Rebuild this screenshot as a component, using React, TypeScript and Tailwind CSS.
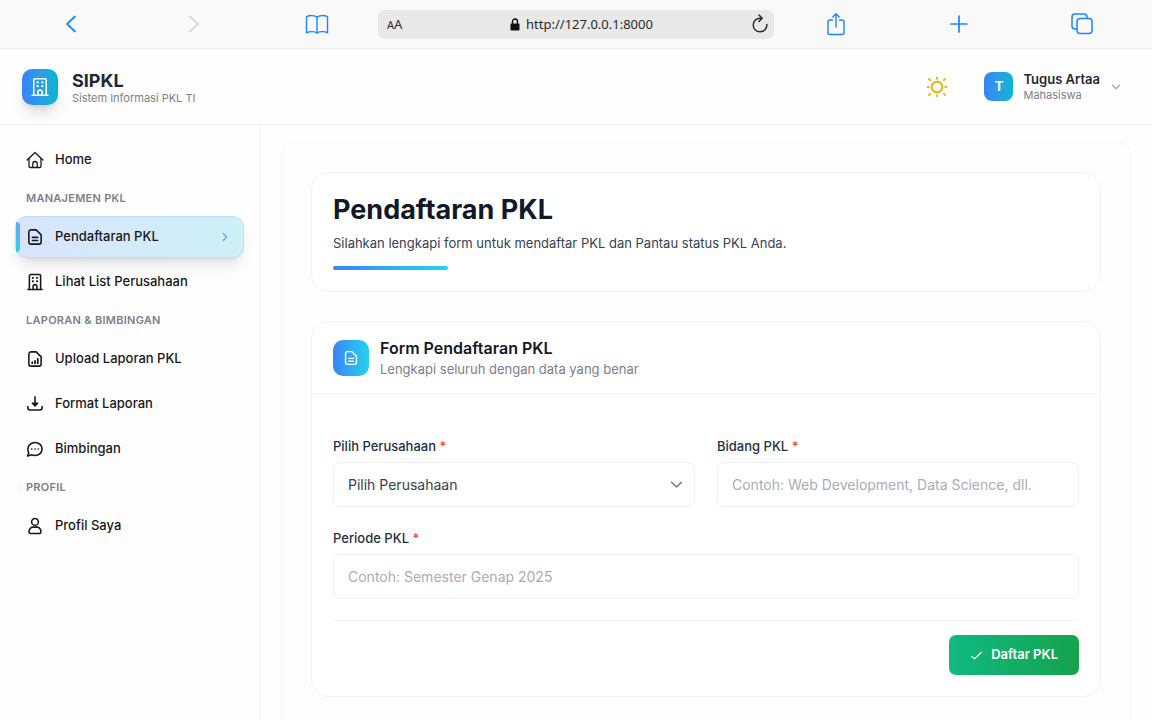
import type { ReactNode } from "react";

type IconProps = { className?: string; children: ReactNode; weight?: number };

function Icon({ className = "size-[18px]", children, weight = 2.1 }: IconProps) {
  return (
    <svg
      viewBox="0 0 24 24"
      fill="none"
      stroke="currentColor"
      strokeWidth={weight}
      strokeLinecap="round"
      strokeLinejoin="round"
      className={`shrink-0 ${className}`}
      aria-hidden="true"
    >
      {children}
    </svg>
  );
}

const HomeShape = (
  <g strokeWidth={1.7}>
    <path d="M1.5 12 12 2l10.500 10" />
    <path d="M4 10v10.300a1.700 1.700 0 0 0 1.700 1.700h12.600a1.700 1.700 0 0 0 1.700-1.700V10" />
    <path d="M9 21.800V17a3 3 0 0 1 6 0v4.800" />
  </g>
);

const BuildingShape = (
  <>
    <path d="M2.500 22h19" />
    <path d="M4.500 22V4a2 2 0 0 1 2-2h11a2 2 0 0 1 2 2v18" />
    <path d="M9.500 22v-4a2.500 2.500 0 0 1 5 0v4" />
    <path d="M9 6.500h.4M14.600 6.500h.4M9 11h.4M14.600 11h.4" strokeWidth={2.6} />
  </>
);

const DocShape = (
  <>
    <path d="M3.800 5.500a3 3 0 0 1 3-3h6.700l6.700 6.700v9.300a3 3 0 0 1-3 3H6.800a3 3 0 0 1-3-3z" />
    <path d="M8.500 12.500h7M8.500 16.700h7" />
  </>
);

const ReportShape = (
  <>
    <path d="M3.800 5.500a3 3 0 0 1 3-3h6.700l6.700 6.700v9.300a3 3 0 0 1-3 3H6.800a3 3 0 0 1-3-3z" />
    <path d="M8.300 17.500v-1.200M12 17.500v-3M15.700 17.500v-5.800" strokeWidth={2.4} />
  </>
);

const DownloadShape = (
  <>
    <path d="M12 2.500v11.500M8.500 11l3.500 3.500 3.500-3.500z" />
    <path d="M2.500 15.500v1.500a3 3 0 0 0 3 3h13a3 3 0 0 0 3-3v-1.500" />
  </>
);

const ChatShape = (
  <>
    <path d="M2.200 21.300 3.700 17A9 9 0 0 1 2.500 12C2.500 7 6.700 3.300 12 3.300S21.500 7 21.500 12s-4.200 8.700-9.500 8.700c-1.600 0-3.200-.4-4.500-1z" />
    <path d="M7.600 12h.1M12 12h.1M16.400 12h.1" strokeWidth={2.200} />
  </>
);

const UserShape = (
  <>
    <circle cx="12" cy="6.500" r="4.500" />
    <path d="M9 13.500h6c3 0 5 3.500 5 6.500a2 2 0 0 1-2 2H6a2 2 0 0 1-2-2c0-3 2-6.500 5-6.500z" />
  </>
);

function ToolButton({ label, children }: { label: string; children: ReactNode }) {
  return (
    <div className="flex flex-1 justify-center">
      <button type="button" aria-label={label} className="text-[#1a86ff]">
        {children}
      </button>
    </div>
  );
}

function BrowserBar() {
  return (
    <div className="flex h-[49px] shrink-0 items-center border-b border-[#ececec] bg-[#f9f9f9] px-[9px]">
      <ToolButton label="Kembali">
        <Icon className="size-6" weight={1.8}>
          <path d="M16 4.500 8 12l8 7.500" />
        </Icon>
      </ToolButton>
      <ToolButton label="Maju">
        <Icon className="size-6 text-[#cfcfcf]" weight={1.5}>
          <path d="M8 4.500 16 12l-8 7.500" />
        </Icon>
      </ToolButton>
      <ToolButton label="Bookmark">
        <Icon className="size-6" weight={1.4}>
          <path d="M12 5.200C10 3.200 4.500 3 1.500 4.800v16c3-1.600 8.500-1.500 10.500.3 2-1.800 7.500-1.900 10.500-.3v-16C19.500 3 14 3.200 12 5.200z" />
          <path d="M12 5.200v15.900" />
        </Icon>
      </ToolButton>
      <div className="flex h-[29px] w-[396px] items-center rounded-lg bg-[#e8e8e8] pl-[9px] pr-1.5 font-['Noto_Sans',sans-serif] text-[#2b2b2b]">
        <button type="button" aria-label="Ukuran teks" className="flex w-6 items-baseline leading-4">
          <span className="text-[11px]">A</span>
          <span className="text-[13px]">A</span>
        </button>
        <div className="flex flex-1 items-center justify-center gap-1.5">
          <svg viewBox="0 0 10 13" className="h-[13px] w-[10px]" aria-hidden="true">
            <rect x="0.500" y="5.500" width="9" height="7" rx="1.200" fill="#111" />
            <path d="M2.500 6V3.500a2.500 2.500 0 0 1 5 0V6" fill="none" stroke="#111" strokeWidth="1.400" />
          </svg>
          <span className="text-[13px] leading-4">http://127.0.0.1:8000</span>
        </div>
        <button type="button" aria-label="Muat ulang" className="flex w-4 justify-center">
          <svg viewBox="0 0 18 20" className="h-5 w-[18px] shrink-0" fill="none" stroke="#2b2b2b" strokeWidth="1.500" aria-hidden="true">
            <path d="M15.800 10.500A6.800 6.800 0 1 1 9 4.200h1.500" strokeLinecap="round" />
            <path d="m8 1 3.200 3.200L8 7.400" strokeLinecap="round" strokeLinejoin="round" />
          </svg>
        </button>
      </div>
      <ToolButton label="Bagikan">
        <Icon className="size-6" weight={1.4}>
          <path d="M8.500 8H6a2 2 0 0 0-2 2v10.500a2 2 0 0 0 2 2h12a2 2 0 0 0 2-2V10a2 2 0 0 0-2-2h-2.500" />
          <path d="M12 15V2M8.800 5 12 1.800 15.200 5" />
        </Icon>
      </ToolButton>
      <ToolButton label="Tab baru">
        <Icon className="size-6" weight={1.7}>
          <path d="M12 4v16M4 12h16" />
        </Icon>
      </ToolButton>
      <ToolButton label="Semua tab">
        <Icon className="size-6" weight={1.5}>
          <rect x="7" y="6.500" width="15" height="15" rx="3" />
          <path d="M7 17H5a3 3 0 0 1-3-3V5a3 3 0 0 1 3-3h9a3 3 0 0 1 3 3v1.500" />
        </Icon>
      </ToolButton>
    </div>
  );
}

function AppHeader() {
  return (
    <header className="flex h-[76px] shrink-0 items-center justify-between border-b border-[#f0f0f1] pl-[22px] pr-[30px]">
      <div className="flex items-center gap-3.5">
        <div className="flex size-9 items-center justify-center rounded-[10px] bg-linear-to-r from-[#3b82f6] to-[#06b6d4] text-white shadow-lg shadow-black/15">
          <Icon className="size-5" weight={1.8}>{BuildingShape}</Icon>
        </div>
        <div>
          <p className="pt-0.5 text-lg font-bold leading-5 text-[#1f2937]">SIPKL</p>
          <p className="text-[11px] leading-[14px] text-[#7b808a]">Sistem Informasi PKL TI</p>
        </div>
      </div>
      <div className="flex items-center gap-9">
        <button type="button" aria-label="Ganti tema" className="text-[#eab308]">
          <Icon className="size-[22px]">
            <circle cx="12" cy="12" r="5.800" />
            <path d="M12 1.800v1.200M12 21v1.200M1.800 12h1.200M21 12h1.200M3.200 3.200l1.300 1.300M19.500 19.500l1.300 1.300M3.200 20.800l1.300-1.300M19.500 4.500l1.300-1.300" />
          </Icon>
        </button>
        <button type="button" className="flex items-center gap-2.5 text-left">
          <span className="flex size-[29px] items-center justify-center rounded-lg bg-linear-to-r from-[#3b82f6] to-[#06b6d4] text-[13px] font-bold text-white">
            T
          </span>
          <span className="flex flex-col">
            <span className="text-[13px] font-semibold leading-4 text-[#1f2937]">Tugus Artaa</span>
            <span className="text-[11px] leading-4 text-[#7b808a]">Mahasiswa</span>
          </span>
          <Icon className="size-3 text-[#a3a8b1]" weight={2.400}>
            <path d="m5 8.500 7 7 7-7" />
          </Icon>
        </button>
      </div>
    </header>
  );
}

function NavItem({ label, icon }: { label: string; icon: ReactNode }) {
  return (
    <a href="#" className="flex h-[42px] items-center gap-[11px] px-[11px] text-[13px] font-medium text-[#18181b]">
      <Icon>{icon}</Icon>
      {label}
    </a>
  );
}

function NavHeading({ children }: { children: ReactNode }) {
  return (
    <h2 className="px-[11px] pb-[11px] pt-2.5 text-[11px] font-semibold leading-[14px] tracking-wide text-[#7b808a]">
      {children}
    </h2>
  );
}

function Sidebar() {
  return (
    <nav className="w-[260px] shrink-0 border-r border-[#f2f2f3] px-[15px] pt-3.5">
      <NavItem label="Home" icon={HomeShape} />
      <NavHeading>MANAJEMEN PKL</NavHeading>
      <a
        href="#"
        aria-current="page"
        className="relative mb-[3px] flex h-[42px] items-center gap-[11px] rounded-[11px] border border-[#bfdbfe] bg-linear-to-r from-[#d8e4fd] to-[#cdf1f6] px-2.5 text-[13px] font-medium text-[#18181b] shadow-lg shadow-black/10"
      >
        <span className="absolute left-0 top-[5px] h-[30px] w-1 rounded-r-full bg-linear-to-b from-[#60a5fa] to-[#22d3ee]" />
        <Icon>{DocShape}</Icon>
        <span className="flex-1">Pendaftaran PKL</span>
        <Icon className="mr-0.5 size-3 text-[#60a5fa]" weight={2.400}>
          <path d="m8.500 5 7 7-7 7" />
        </Icon>
      </a>
      <NavItem label="Lihat List Perusahaan" icon={BuildingShape} />
      <NavHeading>LAPORAN &amp; BIMBINGAN</NavHeading>
      <div className="flex flex-col gap-[3px]">
        <NavItem label="Upload Laporan PKL" icon={ReportShape} />
        <NavItem label="Format Laporan" icon={DownloadShape} />
        <NavItem label="Bimbingan" icon={ChatShape} />
      </div>
      <NavHeading>PROFIL</NavHeading>
      <NavItem label="Profil Saya" icon={UserShape} />
    </nav>
  );
}

function FieldLabel({ htmlFor, children }: { htmlFor: string; children: ReactNode }) {
  return (
    <label htmlFor={htmlFor} className="mb-[7px] block text-[13px] font-medium leading-[18px] text-[#27303f]">
      {children} <span className="text-[#ef4444]">*</span>
    </label>
  );
}

function RegistrationForm() {
  return (
    <form className="px-[21px] pb-[21px] pt-[43px]">
      <div className="grid grid-cols-2 gap-x-[22px] gap-y-[22px]">
        <div>
          <FieldLabel htmlFor="perusahaan">Pilih Perusahaan</FieldLabel>
          <div className="relative">
            <select
              id="perusahaan"
              className="h-[45px] w-full appearance-none rounded-[7px] border border-[#efeff1] bg-white px-3.5 text-[14px] text-[#374151]"
            >
              <option>Pilih Perusahaan</option>
            </select>
            <Icon className="pointer-events-none absolute right-3 top-4 size-[13px] text-[#7d838e]" weight={3}>
              <path d="m3 8 9 8.500L21 8" />
            </Icon>
          </div>
        </div>
        <div>
          <FieldLabel htmlFor="bidang">Bidang PKL</FieldLabel>
          <input
            id="bidang"
            placeholder="Contoh: Web Development, Data Science, dll."
            className="h-[45px] w-full rounded-[7px] border border-[#efeff1] bg-white px-3.5 text-[14px] placeholder:text-[#a7acb8]"
          />
        </div>
        <div className="col-span-2">
          <FieldLabel htmlFor="periode">Periode PKL</FieldLabel>
          <input
            id="periode"
            placeholder="Contoh: Semester Genap 2025"
            className="h-[45px] w-full rounded-[7px] border border-[#efeff1] bg-white px-3.5 text-[14px] placeholder:text-[#a7acb8]"
          />
        </div>
      </div>
      <div className="mt-[21px] flex justify-end border-t border-[#f2f2f3] pt-3.5">
        <button
          type="button"
          className="flex h-10 items-center gap-2 rounded-[7px] bg-linear-to-r from-[#10b981] to-[#16a34a] px-[21px] text-[13px] font-semibold text-white"
        >
          <Icon className="size-[13px]" weight={2}>
            <path d="m3 13.500 5.500 4.500L21 6" />
          </Icon>
          Daftar PKL
        </button>
      </div>
    </form>
  );
}

export default function App() {
  return (
    <div className="flex h-screen flex-col overflow-hidden bg-[#fefefe] font-['Inter',sans-serif]">
      <BrowserBar />
      <AppHeader />
      <div className="flex min-h-0 flex-1">
        <Sidebar />
        <main className="min-w-0 flex-1 overflow-y-auto px-[21px] pb-5 pt-[17px] [scrollbar-width:none]">
          <div className="flex min-h-[640px] flex-col gap-[29px] rounded-[11px] border border-[#f6f6f7] p-[29px]">
            <section className="rounded-[18px] border border-[#f2f2f3] bg-white px-[21px] py-[21px]">
              <h1 className="text-[27px] font-bold leading-8 text-[#111827]">Pendaftaran PKL</h1>
              <p className="mt-[7px] text-[13px] leading-5 text-[#374151]">
                Silahkan lengkapi form untuk mendaftar PKL dan Pantau status PKL Anda.
              </p>
              <div className="mt-[13px] h-1 w-[115px] rounded-full bg-linear-to-r from-[#3b82f6] to-[#22d3ee]" />
            </section>
            <section className="rounded-[18px] border border-[#f2f2f3] bg-white">
              <div className="flex h-[72px] items-center gap-[11px] border-b border-[#f2f2f3] px-[21px]">
                <div className="flex size-9 items-center justify-center rounded-[10px] bg-linear-to-r from-[#3b82f6] to-[#22d3ee] text-white">
                  <Icon className="size-4">{DocShape}</Icon>
                </div>
                <div>
                  <h2 className="text-[16px] font-semibold leading-[22px] text-[#111827]">Form Pendaftaran PKL</h2>
                  <p className="text-[13px] leading-5 text-[#7b808a]">Lengkapi seluruh dengan data yang benar</p>
                </div>
              </div>
              <RegistrationForm />
            </section>
          </div>
        </main>
      </div>
    </div>
  );
}
